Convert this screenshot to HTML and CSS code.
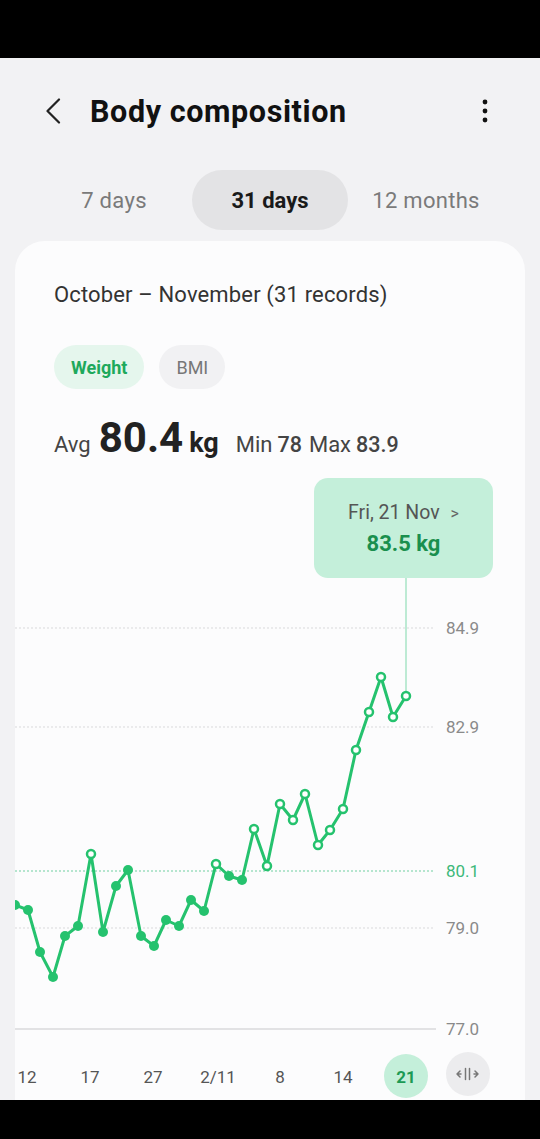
FILE: index.html
```html
<!DOCTYPE html>
<html lang="en">
<head>
<meta charset="utf-8">
<title>Body composition</title>
<link rel="stylesheet" href="styles.css">
</head>
<body>
<div class="statusbar"></div>
<header class="appbar">
  <svg class="back" width="16" height="26" viewBox="0 0 16 26"><path d="M14 1.5 L2.5 13 L14 24.5" fill="none" stroke="#222" stroke-width="2.2" stroke-linecap="round" stroke-linejoin="round"/></svg>
  <h1 class="title">Body composition</h1>
  <svg class="more" width="8" height="24" viewBox="0 0 8 24"><circle cx="4" cy="3" r="2.4" fill="#111"/><circle cx="4" cy="12" r="2.4" fill="#111"/><circle cx="4" cy="21" r="2.4" fill="#111"/></svg>
</header>
<nav class="tabs">
  <span class="tab">7 days</span>
  <span class="tab active">31 days</span>
  <span class="tab">12 months</span>
</nav>
<section class="card">
  <p class="range">October – November (31 records)</p>
  <div class="chips">
    <span class="chip on">Weight</span>
    <span class="chip">BMI</span>
  </div>
  <div class="stats">
    <span class="lbl">Avg</span>
    <span class="big">80.4</span>
    <span class="unit">kg</span>
    <span class="lbl gap">Min</span>
    <span class="val">78</span>
    <span class="lbl gap2">Max</span>
    <span class="val">83.9</span>
  </div>
  <div class="chart">
    <svg class="plot" width="510" height="630" viewBox="15 470 510 630">
      <g class="grid">
        <line x1="15" y1="628" x2="435" y2="628" class="dot"/>
        <line x1="15" y1="727" x2="435" y2="727" class="dot"/>
        <line x1="15" y1="871" x2="435" y2="871" class="dot green"/>
        <line x1="15" y1="928" x2="435" y2="928" class="dot"/>
        <line x1="15" y1="1029" x2="436" y2="1029" class="base"/>
      </g>
      <g class="ylab">
        <text x="446" y="634">84.9</text>
        <text x="446" y="733">82.9</text>
        <text x="446" y="877" class="avg">80.1</text>
        <text x="446" y="934">79.0</text>
        <text x="446" y="1035">77.0</text>
      </g>
      <line x1="406" y1="578" x2="406" y2="692" class="pin"/>
      <polyline class="line" points="15,905 28,910 40,952 53,977 65,936 78,926 91,854 103,932 116,886 128,870 141,936 154,946 166,920 179,926 191,900 204,911 216,864 229,876 242,880 254,829 267,866 280,804 293,820 305,794 318,845 330,830 343,809 356,750 369,712 381,677 393,717 406,696"/>
      <g class="full">
        <circle cx="15" cy="905" r="5"/><circle cx="28" cy="910" r="5"/><circle cx="40" cy="952" r="5"/><circle cx="53" cy="977" r="5"/><circle cx="65" cy="936" r="5"/><circle cx="78" cy="926" r="5"/><circle cx="103" cy="932" r="5"/><circle cx="116" cy="886" r="5"/><circle cx="128" cy="870" r="5"/><circle cx="141" cy="936" r="5"/><circle cx="154" cy="946" r="5"/><circle cx="166" cy="920" r="5"/><circle cx="179" cy="926" r="5"/><circle cx="191" cy="900" r="5"/><circle cx="204" cy="911" r="5"/><circle cx="229" cy="876" r="5"/><circle cx="242" cy="880" r="5"/>
      </g>
      <g class="open">
        <circle cx="91" cy="854" r="4"/><circle cx="216" cy="864" r="4"/><circle cx="254" cy="829" r="4"/><circle cx="267" cy="866" r="4"/><circle cx="280" cy="804" r="4"/><circle cx="293" cy="820" r="4"/><circle cx="305" cy="794" r="4"/><circle cx="318" cy="845" r="4"/><circle cx="330" cy="830" r="4"/><circle cx="343" cy="809" r="4"/><circle cx="356" cy="750" r="4"/><circle cx="369" cy="712" r="4"/><circle cx="381" cy="677" r="4"/><circle cx="393" cy="717" r="4"/><circle cx="406" cy="696" r="4"/>
      </g>
      <g class="xlab">
        <text x="27" y="1083">12</text>
        <text x="90" y="1083">17</text>
        <text x="153" y="1083">27</text>
        <text x="218" y="1083">2/11</text>
        <text x="280" y="1083">8</text>
        <text x="343" y="1083">14</text>
        <circle cx="406" cy="1076" r="22" class="sel"/>
        <text x="406" y="1083" class="seltxt">21</text>
        <circle cx="468" cy="1074" r="22" class="btn"/>
        <path class="ico" d="M457 1074 h4 M460 1071 l-3 3 l3 3 M465.5 1068.5 v11 M469.5 1068.5 v11 M478 1074 h-4 M475 1071 l3 3 l-3 3"/>
      </g>
    </svg>
    <div class="tip">
      <div class="tip-date">Fri, 21 Nov <span class="chev">&gt;</span></div>
      <div class="tip-val">83.5 kg</div>
    </div>
  </div>
</section>
<div class="navbar"></div>
</body>
</html>
```
FILE: styles.css
```css
* { box-sizing: border-box; }
html, body { margin: 0; padding: 0; }
body {
  width: 540px;
  height: 1139px;
  overflow: hidden;
  background: #f2f2f4;
  font-family: Roboto, "Noto Sans", "Liberation Sans", sans-serif;
  color: #222;
}
.statusbar { height: 58px; background: #000; }
.navbar { height: 39px; background: #000; }

.appbar {
  height: 106px;
  display: flex;
  align-items: center;
  padding: 0 0 0 45px;
}
.back { flex: none; }
.title {
  margin: 0 0 0 29px;
  font-size: 30.5px;
  font-weight: 700;
  color: #111;
  letter-spacing: 0.6px;
  flex: 1;
}
.more { margin-right: 51px; }

.tabs {
  margin: 6px 36px 0;
  height: 60px;
  display: grid;
  grid-template-columns: repeat(3, 1fr);
}
.tab {
  display: flex;
  align-items: center;
  justify-content: center;
  font-size: 22px;
  letter-spacing: 0.3px;
  color: #7a7a7a;
  border-radius: 30px;
}
.tab.active {
  background: #e3e3e5;
  color: #1a1a1a;
  font-weight: 700;
  letter-spacing: 0;
}

.card {
  margin: 11px 15px 0;
  height: 859px;
  background: #fcfcfd;
  border-radius: 30px 30px 0 0;
  padding: 40px 0 0 39px;
  overflow: hidden;
}
.range {
  margin: 0;
  font-size: 22px;
  letter-spacing: 0.15px;
  line-height: 28px;
  color: #333;
}
.chips {
  margin-top: 36px;
  display: flex;
  gap: 15px;
}
.chip {
  height: 44px;
  padding: 0 17px;
  border-radius: 22px;
  display: flex;
  align-items: center;
  font-size: 18px;
  background: #f1f1f3;
  color: #777;
}
.chip.on {
  background: #e5f6ed;
  color: #1ea95c;
  font-weight: 700;
}
.stats {
  margin-top: 24px;
  height: 50px;
  display: flex;
  align-items: baseline;
  line-height: 50px;
  color: #444;
}
.lbl { font-size: 22px; }
.big { font-size: 42px; font-weight: 700; color: #222; margin-left: 8px; }
.unit { font-size: 27px; font-weight: 700; color: #222; margin-left: 6px; }
.gap { margin-left: 17px; }
.gap2 { margin-left: 7px; }
.val { font-size: 21.5px; font-weight: 500; margin-left: 5px; color: #444; }

.chart {
  position: relative;
  margin: 7px 0 0 -39px;
  width: 510px;
  height: 630px;
}
.plot { display: block; }
.dot { stroke: #d9d9db; stroke-width: 1; stroke-dasharray: 2 2; }
.dot.green { stroke: #6fcfa0; }
.base { stroke: #e2e2e4; stroke-width: 2; }
.ylab text { font-size: 17px; fill: #8a8a8a; }
.ylab text.avg { fill: #3cb87a; }
.pin { stroke: #a8e4c6; stroke-width: 1.5; }
.line { fill: none; stroke: #25c26e; stroke-width: 3; stroke-linejoin: round; stroke-linecap: round; }
.full circle { fill: #25c26e; }
.open circle { fill: #fff; stroke: #25c26e; stroke-width: 2.5; }
.xlab text { font-size: 17px; fill: #555; text-anchor: middle; }
.sel { fill: #c4efda; }
.xlab text.seltxt { fill: #1c9a55; font-weight: 700; }
.btn { fill: #ececee; }
.ico { fill: none; stroke: #777; stroke-width: 1.5; stroke-linecap: round; stroke-linejoin: round; }

.tip {
  position: absolute;
  left: 299px;
  top: 8px;
  width: 179px;
  height: 100px;
  border-radius: 14px;
  background: #c4efda;
  padding-top: 21px;
  text-align: center;
}
.tip-date { font-size: 19.5px; line-height: 28px; color: #555; }
.chev { font-size: 16px; margin-left: 6px; color: #666; }
.tip-val { margin-top: 2px; font-size: 22px; line-height: 28px; font-weight: 700; color: #1a8f4e; }
```
